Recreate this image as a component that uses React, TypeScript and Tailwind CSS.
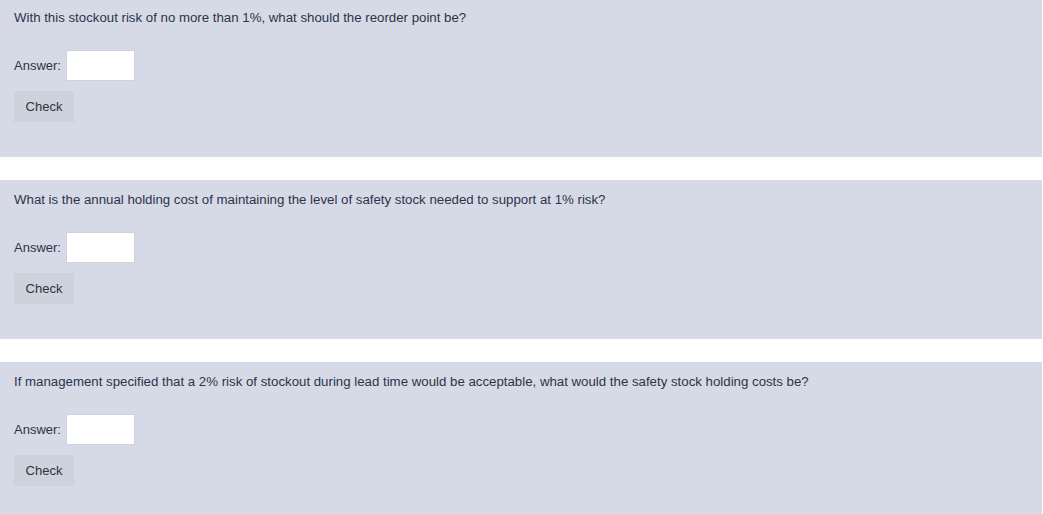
import React from "react";

const questions = [
  "With this stockout risk of no more than 1%, what should the reorder point be?",
  "What is the annual holding cost of maintaining the level of safety stock needed to support at 1% risk?",
  "If management specified that a 2% risk of stockout during lead time would be acceptable, what would the safety stock holding costs be?",
];

export default function App() {
  return (
    <div
      className="w-[1043px] h-[514px] overflow-hidden bg-white"
      style={{ fontFamily: '"Liberation Sans", Arial, Helvetica, sans-serif' }}
    >
      <div className="flex flex-col gap-[23px] -mt-[2px] w-[1042px]">
        {questions.map((q, i) => (
          <div key={i} className="bg-[#d6dae7] pl-[14px] pt-[11px] pb-[35px] text-[13px] text-[#2b3447]">
            <div className="leading-[18px] text-[13.25px]">{q}</div>
            <div className="mt-[23px] flex items-center gap-[5px]">
              <span className="leading-[18px]">Answer:</span>
              <input
                type="text"
                className="w-[69px] h-[31px] bg-white border border-[#cdd2dc] outline-none"
              />
            </div>
            <button className="mt-[10px] w-[60px] h-[31px] bg-[#cdd2dc] text-[#2f3441] text-[13px] flex items-center justify-center">
              Check
            </button>
          </div>
        ))}
      </div>
    </div>
  );
}
